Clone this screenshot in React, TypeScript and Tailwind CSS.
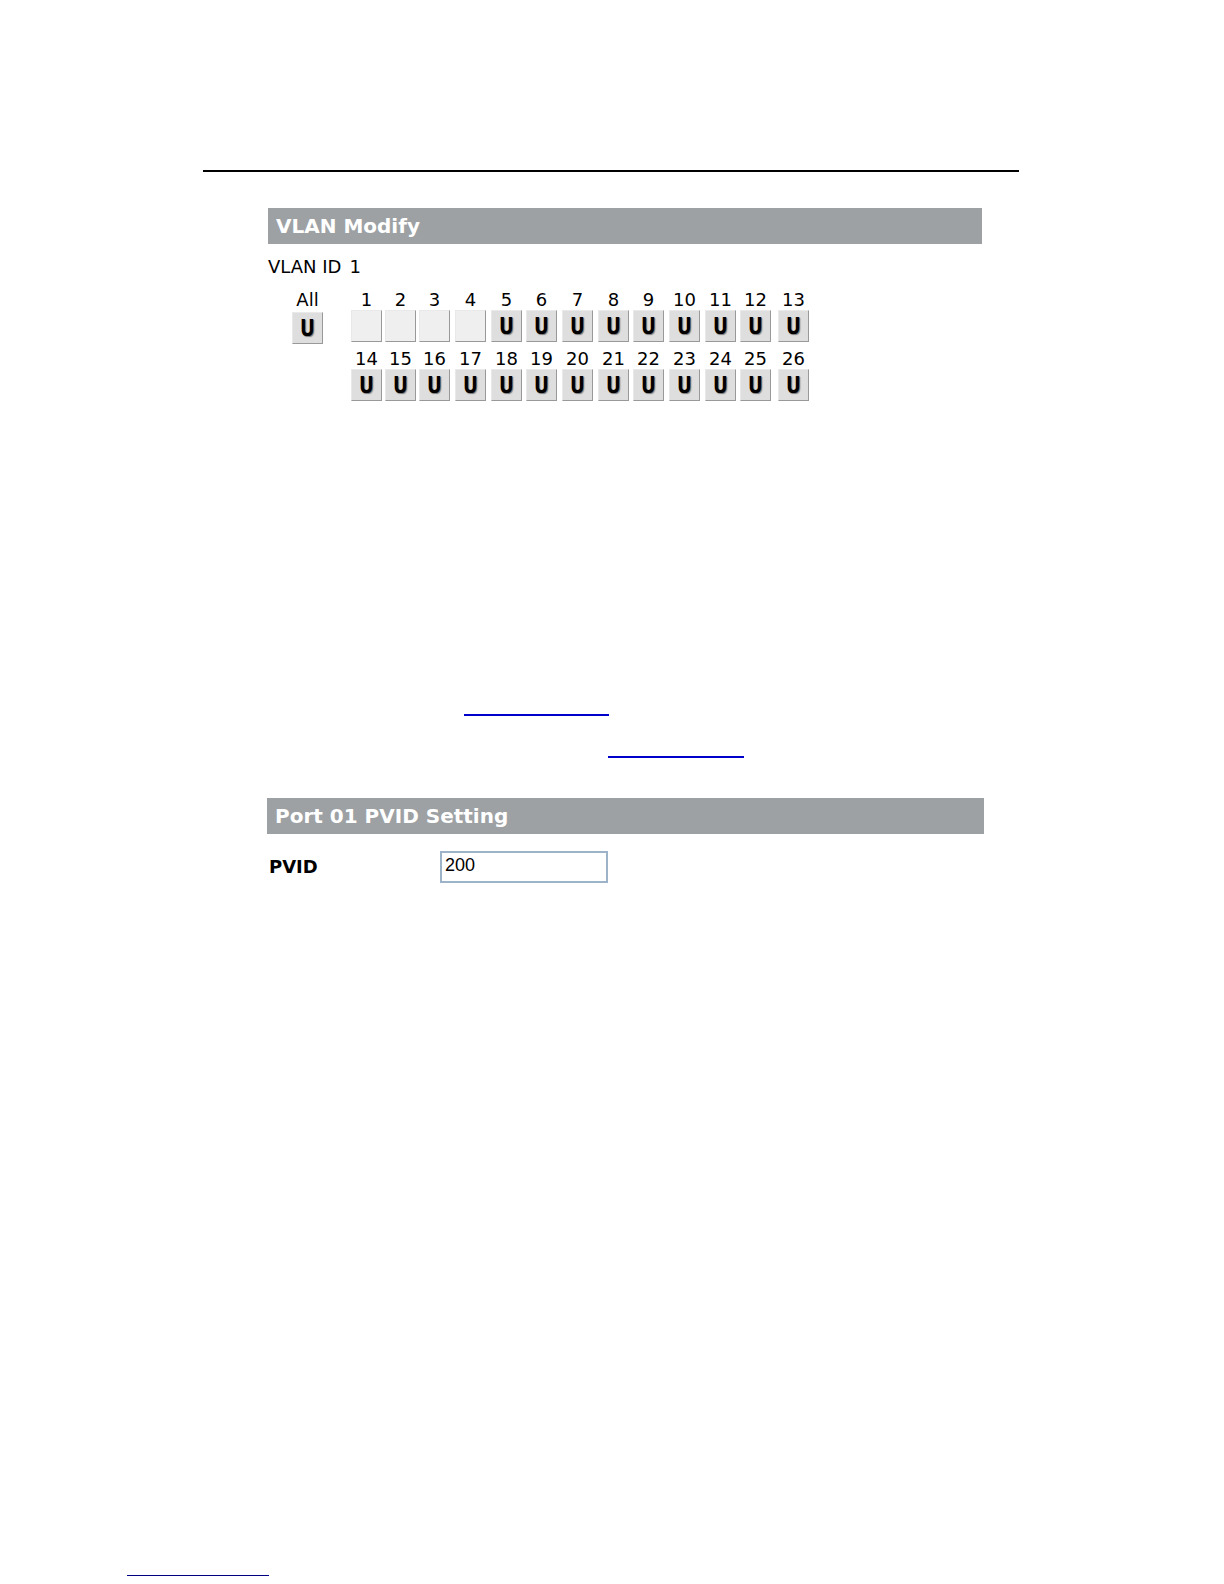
import { useState } from "react";

interface PanelTitleProps {
    children: string;
}

interface PortButtonProps {
    label: string;
    untagged: boolean;
    onToggle: () => void;
}

const PORTS = Array.from({ length: 26 }, (_, i) => i + 1);
const EMPTY_PORTS = [1, 2, 3, 4];

const PanelTitle = ({ children }: PanelTitleProps) => (
    <h2 className="flex h-9 items-center bg-[#9da1a4] px-2 text-[20px] font-bold text-white">
        {children}
    </h2>
);

const PortButton = ({ label, untagged, onToggle }: PortButtonProps) => (
    <button
        type="button"
        aria-label={label}
        onClick={onToggle}
        className={`flex h-8 w-[31px] items-center justify-center border border-t-[#e9e9e9] border-r-[#999999] border-b-[#999999] border-l-[#e9e9e9] font-['DejaVu_Sans_Mono',monospace] text-[23px] leading-none font-bold text-black text-shadow-[1px_1px_1px_#777777] ${
            untagged ? "bg-[#dedede]" : "bg-[#efefef]"
        }`}
    >
        {untagged ? "U" : ""}
    </button>
);

export default function App() {
    const [untagged, setUntagged] = useState<number[]>(PORTS.filter((p) => !EMPTY_PORTS.includes(p)));
    const [pvid, setPvid] = useState("200");

    const togglePort = (port: number) => {
        setUntagged((prev) => (prev.includes(port) ? prev.filter((p) => p !== port) : [...prev, port]));
    };

    return (
        <div className="flex min-h-screen flex-col bg-white font-['DejaVu_Sans',sans-serif] text-[18px] leading-5 text-black">
            <main className="mr-[205px] ml-[203px] pt-[170px]">
                <hr className="border-t-2 border-black" />

                {/* VLAN members */}
                <section className="mt-9 mr-[37px] ml-[65px]">
                    <PanelTitle>VLAN Modify</PanelTitle>
                    <div className="mt-[13px] flex gap-2">
                        <span>VLAN ID</span>
                        <span>1</span>
                    </div>
                    <div className="mt-[13px] flex">
                        <div className="ml-6 flex w-[59px] shrink-0 flex-col items-start gap-[2px]">
                            <span className="w-[31px] text-center">All</span>
                            <PortButton label="All" untagged onToggle={() => setUntagged(PORTS)} />
                        </div>
                        <div className="grid grid-cols-[repeat(2,34px)_repeat(3,36px_36px_35px)_38px_31px] gap-y-[7px]">
                            {PORTS.map((port) => (
                                <div key={port} className="flex w-[31px] flex-col items-center">
                                    <span>{port}</span>
                                    <PortButton
                                        label={`Port ${port}`}
                                        untagged={untagged.includes(port)}
                                        onToggle={() => togglePort(port)}
                                    />
                                </div>
                            ))}
                        </div>
                    </div>
                </section>

                {/* Cross references */}
                <nav className="mt-[293px] flex flex-col">
                    <a href="#vlan" aria-label="VLAN" className="ml-[261px] h-[22px] w-[145px] border-b-2 border-[#0000cc]" />
                    <a href="#pvid" aria-label="PVID" className="mt-5 ml-[405px] h-[22px] w-[136px] border-b-2 border-[#0000cc]" />
                </nav>

                {/* Port PVID */}
                <section className="mt-10 mr-[35px] ml-16">
                    <PanelTitle>Port 01 PVID Setting</PanelTitle>
                    <div className="mt-[17px] flex items-center">
                        <label htmlFor="pvid" className="w-[173px] pl-[2px] font-bold">
                            PVID
                        </label>
                        <input
                            id="pvid"
                            type="text"
                            value={pvid}
                            onChange={(e) => setPvid(e.target.value)}
                            className="h-8 w-[168px] border-2 border-[#9db4c8] bg-white px-[3px] pb-1 font-['Liberation_Sans',sans-serif] text-[18px]"
                        />
                    </div>
                </section>
            </main>

            <footer className="mt-auto ml-[127px] pb-2">
                <a href="#top" aria-label="Top" className="block h-5 w-[142px] border-b border-[#000080]" />
            </footer>
        </div>
    );
}
